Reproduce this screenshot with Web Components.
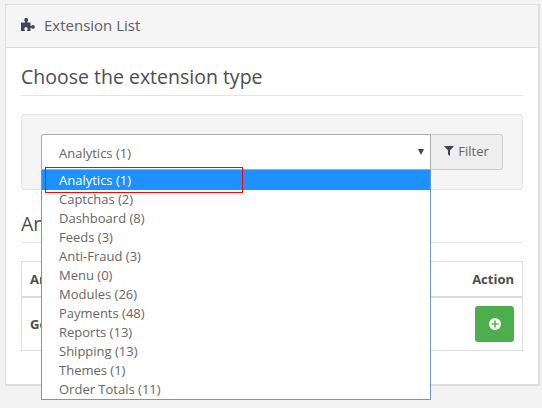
<!DOCTYPE html>
<html><head><meta charset="utf-8">
<style>
html,body{margin:0;padding:0;background:#f3f3f3;}
body{width:542px;height:408px;overflow:hidden;font-family:"Open Sans",sans-serif;font-size:13px;color:#666;}
</style></head><body>
<ext-panel>
  <span slot="title">Extension List</span>
  <ext-section heading="Choose the extension type">
    <ext-filter></ext-filter>
  </ext-section>
  <ext-section heading="An">
    <ext-table></ext-table>
  </ext-section>
</ext-panel>
<script>
function def(name,html,init){
  customElements.define(name,class extends HTMLElement{
    connectedCallback(){
      if(this.shadowRoot)return;
      const r=this.attachShadow({mode:'open'});
      r.innerHTML=html;
      if(init)init(r,this);
    }
  });
}
def('ext-panel',`<style>
:host{display:block;margin:4px 2px 0 5px;background:#fff;border:1px solid #ddd;border-bottom:2px solid #ddd;border-right:2px solid #ddd;height:382px;box-sizing:border-box;}
header{height:43px;box-sizing:border-box;background:#f5f5f5;border-bottom:1px solid #ddd;display:flex;align-items:center;gap:9px;padding:0 0 3px 15px;font-size:15px;color:#5c6068;}
svg{width:14px;height:15px;fill:#3f4657;display:block;margin-top:-1px}
main{padding:15px 15px 0 15px}
</style>
<header><svg viewBox="0 0 14 14"><path d="M0 5h3.500c.6 0 .8-.5.4-1C3.400 3.400 3.300 3 3.300 2.300 3.300 1.300 4.100.6 5.200.6s1.900.7 1.900 1.700c0 .7-.1 1.100-.6 1.700-.4.500-.2 1 .4 1H9.500v3c0 .5.500.7.900.3.500-.5 1-.7 1.600-.7 1 0 1.800.8 1.800 1.800S13 11.200 12 11.200c-.6 0-1.100-.2-1.600-.7-.4-.4-.9-.2-.9.300V13.500H6.500c-.5 0-.7-.5-.3-.9.400-.4.500-.8.500-1.300 0-.9-.7-1.500-1.700-1.500s-1.700.6-1.700 1.500c0 .5.100.9.500 1.300.4.400.2.900-.3.900H0z"/></svg><slot name="title"></slot></header>
<main><slot></slot></main>`);
def('ext-section',`<style>
:host{display:block}
h2{margin:0 0 18px;font-weight:400;font-size:19.500px;line-height:28px;height:28px;color:#4d4d4d;border-bottom:1px solid #e5e5e5;padding-bottom:4px;white-space:nowrap}
</style><h2></h2><slot></slot>`,(r,h)=>{
  r.querySelector('h2').textContent=h.getAttribute('heading');
});
const opts=['Analytics (1)','Captchas (2)','Dashboard (8)','Feeds (3)','Anti-Fraud (3)','Menu (0)','Modules (26)','Payments (48)','Reports (13)','Shipping (13)','Themes (1)','Order Totals (11)'];
def('ext-filter',`<style>
:host{display:block;position:relative;background:#f5f5f5;border:1px solid #e3e3e3;border-radius:3px;padding:19px;margin-bottom:20px;height:76px;box-sizing:border-box}
.row{display:flex;height:36px}
.sel{position:relative;width:390px;box-sizing:border-box;border:1px solid #aaa;border-radius:3px 0 0 0;background:#fff;display:flex;align-items:center;padding:2px 0 0 17px;color:#666;font-size:13px}
.sel i{position:absolute;right:6px;top:14px;width:0;height:0;border-left:3.500px solid transparent;border-right:3.500px solid transparent;border-top:6px solid #444}
button{width:72px;box-sizing:border-box;border:1px solid #ccc;border-left:0;border-radius:0 3px 3px 0;background:#eee;color:#666;font:13px "Open Sans",sans-serif;display:flex;align-items:center;justify-content:center;gap:4px;padding:0 0 2px}
button svg{width:10px;height:10px;fill:#3d4456}
.menu{position:absolute;left:19px;top:55px;width:390px;box-sizing:border-box;background:#fff;border:1px solid #6f97cf;border-top:0;z-index:5}
.o{height:19px;line-height:19px;padding-left:17px;color:#666;font-size:13px;white-space:nowrap}
.o.a{background:#1e90ff;color:#fff;height:20px;line-height:20px;}
.red{position:absolute;left:23px;top:52px;width:198px;height:26px;box-sizing:border-box;border:1px solid #f00;z-index:6}
</style>
<div class="row"><div class="sel">Analytics (1)<i></i></div><button><svg viewBox="0 0 10 10"><path d="M0 0h10L6 4.500V10L4 8.500V4.500z"/></svg>Filter</button></div>
<div class="menu"></div><div class="red"></div>`,(r)=>{
  const m=r.querySelector('.menu');
  opts.forEach((t,i)=>{const d=document.createElement('div');d.className='o'+(i==0?' a':'');d.textContent=t;m.appendChild(d)});
});
def('ext-table',`<style>
:host{display:block;border:1px solid #ddd;height:90px;box-sizing:border-box;font-size:13px;color:#4d4d4d}
.h{height:34px;border-bottom:2px solid #ddd;display:flex;justify-content:space-between;align-items:center;padding:0 8px;font-weight:700;box-sizing:content-box}
.b{height:52px;display:flex;justify-content:space-between;align-items:center;padding:0 8px;font-weight:700}
.add{width:39px;height:36px;background:#4cae4c;border-radius:3px;display:flex;align-items:center;justify-content:center}
svg{width:12px;height:12px;display:block}
</style>
<div class="h"><span>An</span><span>Action</span></div>
<div class="b"><span>Go</span><span class="add"><svg viewBox="0 0 12 12"><circle cx="6" cy="6" r="6" fill="#fff"/><path d="M5.200 2.500h1.600v2.700h2.700v1.600H6.800v2.700H5.200V6.800H2.500V5.200h2.700z" fill="#4cbb4c"/></svg></span></div>`);
</script>
</body></html>
